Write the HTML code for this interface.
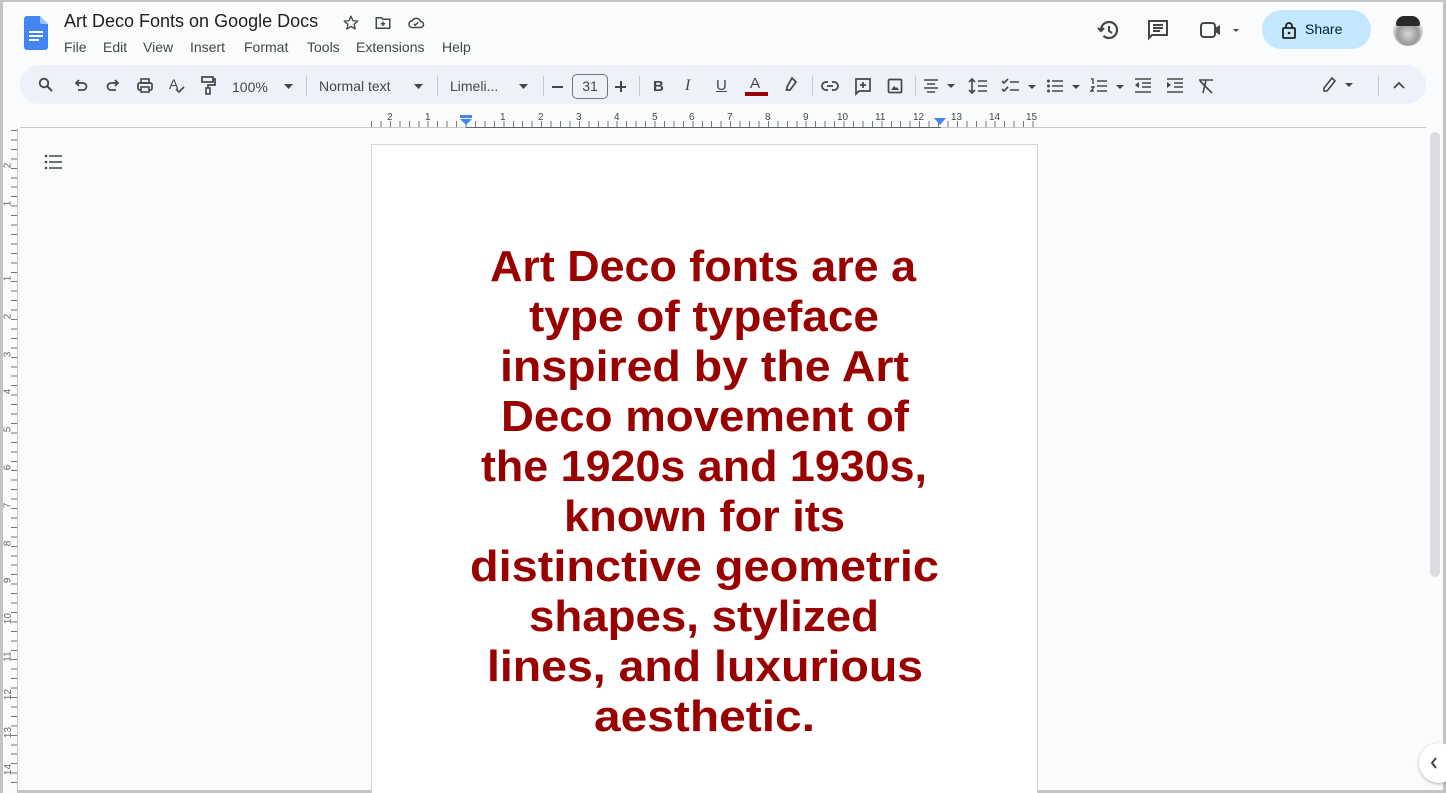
<!DOCTYPE html>
<html><head><meta charset="utf-8">
<style>
*{box-sizing:border-box;margin:0;padding:0}
html,body{width:1446px;height:793px;overflow:hidden}
body{background:#f9fbfd;font-family:"Liberation Sans",Arial,sans-serif;color:#444746;position:relative;border:3px solid #c4c4c4;border-top-width:2px}
.abs{position:absolute}
.title{left:61px;top:9px;font-size:18px;color:#1f1f1f}
.menu{top:37px;font-size:14px;color:#444746}
.tb{left:17px;top:63px;width:1406px;height:39px;background:#edf2fa;border-radius:20px}
.tt{font-size:14px;color:#444746}
.sep{width:1px;height:20px;background:#c7c7c7;top:10px}
svg{position:absolute;overflow:visible}
.page{left:368px;top:142px;width:667px;height:660px;background:#fff;border:1px solid #d3d3d3}
.share{left:1259px;top:8px;width:109px;height:39px;background:#c2e7ff;border-radius:20px;font-size:14px;color:#001d35}
</style></head><body>
<!-- docs logo -->
<svg style="left:21px;top:14px" width="24" height="34" viewBox="0 0 24 34"><path d="M3 0h13l8 8v23a3 3 0 0 1-3 3H3a3 3 0 0 1-3-3V3a3 3 0 0 1 3-3z" fill="#4285f4"/><path d="M16 0v6a2 2 0 0 0 2 2h6z" fill="#a1c2fa"/><rect x="5" y="15" width="14" height="2" fill="#fff"/><rect x="5" y="19" width="14" height="2" fill="#fff"/><rect x="5" y="23" width="10" height="2" fill="#fff"/></svg>
<div class="abs title">Art Deco Fonts on Google Docs</div>
<svg style="left:339px;top:12px" width="18" height="18" viewBox="0 0 24 24"><path d="M12 3l2.6 6 6.4.5-4.9 4.2 1.5 6.3L12 16.6 6.4 20l1.5-6.3L3 9.5 9.4 9z" fill="none" stroke="#444746" stroke-width="1.8" stroke-linejoin="round"/></svg>
<svg style="left:371px;top:12px" width="18" height="18" viewBox="0 0 24 24"><path d="M3 5h7l2 2h9v12H3z" fill="none" stroke="#444746" stroke-width="2"/><path d="M12 10v6M9 13h6" stroke="#444746" stroke-width="2"/></svg>
<svg style="left:403px;top:12px" width="20" height="18" viewBox="0 0 24 24"><path d="M7 18h11a4 4 0 0 0 0-8 6 6 0 0 0-11-1 4.5 4.5 0 0 0 0 9z" fill="none" stroke="#444746" stroke-width="2"/><path d="M9 13l2 2 4-4" fill="none" stroke="#444746" stroke-width="2"/></svg>
<div class="abs menu" style="left:61px">File</div>
<div class="abs menu" style="left:100px">Edit</div>
<div class="abs menu" style="left:140px">View</div>
<div class="abs menu" style="left:187px">Insert</div>
<div class="abs menu" style="left:241px">Format</div>
<div class="abs menu" style="left:304px">Tools</div>
<div class="abs menu" style="left:353px">Extensions</div>
<div class="abs menu" style="left:439px">Help</div>

<!-- right header -->
<svg style="left:1093px;top:16px" width="24" height="24" viewBox="0 0 24 24"><path d="M5 12a8 8 0 1 1 2.5 5.8" fill="none" stroke="#444746" stroke-width="2.2"/><path d="M2 10l3 3 3-3" fill="none" stroke="#444746" stroke-width="2.2"/><path d="M13 8v5l3 2" fill="none" stroke="#444746" stroke-width="2"/></svg>
<svg style="left:1143px;top:16px" width="24" height="24" viewBox="0 0 24 24"><path d="M3 3h18v14H6l-3 3z" fill="none" stroke="#444746" stroke-width="2"/><path d="M7 7h10M7 10h10M7 13h7" stroke="#444746" stroke-width="2"/></svg>
<svg style="left:1196px;top:17px" width="44" height="22" viewBox="0 0 44 22"><rect x="2" y="4" width="14" height="14" rx="3" fill="none" stroke="#444746" stroke-width="2"/><path d="M16 9l5-3v10l-5-3z" fill="#444746"/><path d="M34 10h6l-3 3z" fill="#444746"/></svg>
<div class="abs share"><svg style="left:19px;top:11px" width="16" height="18" viewBox="0 0 16 18"><rect x="2" y="7" width="12" height="10" rx="1" fill="none" stroke="#1f1f1f" stroke-width="1.8"/><path d="M5 7V5a3 3 0 0 1 6 0v2" fill="none" stroke="#1f1f1f" stroke-width="1.8"/><circle cx="8" cy="12" r="1.3" fill="#1f1f1f"/></svg><span class="abs" style="left:43px;top:11px">Share</span></div>
<div class="abs" style="left:1390px;top:14px;width:30px;height:30px;border-radius:50%;background:radial-gradient(circle at 50% 60%,#d8d8d8 0,#9a9a9a 45%,#f0f0f0 70%)"></div>
<div class="abs" style="left:1393px;top:14px;width:24px;height:10px;border-radius:12px 12px 3px 3px;background:#2a2a2a"></div>

<!-- toolbar -->
<div class="abs tb"></div>
<svg style="left:35px;top:75px" width="16" height="16" viewBox="0 0 16 16"><circle cx="6" cy="6" r="4.3" fill="none" stroke="#444746" stroke-width="1.8"/><path d="M9 9l5 5" stroke="#444746" stroke-width="2"/></svg>
<svg style="left:70px;top:77px" width="16" height="14" viewBox="0 0 16 14"><path d="M4 4h6a3.5 3.5 0 0 1 0 7H5M6 1L3 4l3 3" fill="none" stroke="#444746" stroke-width="1.7"/></svg>
<svg style="left:102px;top:77px" width="16" height="14" viewBox="0 0 16 14"><path d="M12 4H6a3.5 3.5 0 0 0 0 7h5M10 1l3 3-3 3" fill="none" stroke="#444746" stroke-width="1.7"/></svg>
<svg style="left:133px;top:75px" width="18" height="17" viewBox="0 0 18 17"><rect x="2" y="6" width="14" height="7" rx="1.5" fill="none" stroke="#444746" stroke-width="1.7"/><rect x="5" y="2" width="8" height="4" fill="none" stroke="#444746" stroke-width="1.6"/><rect x="5" y="10" width="8" height="5" fill="#edf2fa" stroke="#444746" stroke-width="1.6"/></svg>
<div class="abs" style="left:166px;top:74px;font-size:14px;color:#444746">A</div>
<svg style="left:172px;top:84px" width="10" height="8" viewBox="0 0 10 8"><path d="M1 3l3 3 5-5" fill="none" stroke="#444746" stroke-width="1.6"/></svg>
<svg style="left:197px;top:74px" width="16" height="20" viewBox="0 0 16 20"><rect x="2" y="1" width="11" height="5" fill="none" stroke="#444746" stroke-width="1.7"/><path d="M13 3h2v6H8v3" fill="none" stroke="#444746" stroke-width="1.7"/><rect x="6" y="12" width="4" height="6" fill="none" stroke="#444746" stroke-width="1.6"/></svg>
<div class="abs tt" style="left:229px;top:77px">100%</div>
<svg style="left:281px;top:82px" width="10" height="6"><path d="M0 0h9l-4.5 5z" fill="#444746"/></svg>
<div class="abs sep" style="left:303px;top:74px"></div>
<div class="abs tt" style="left:316px;top:76px">Normal text</div>
<svg style="left:411px;top:82px" width="10" height="6"><path d="M0 0h9l-4.5 5z" fill="#444746"/></svg>
<div class="abs sep" style="left:434px;top:74px"></div>
<div class="abs tt" style="left:447px;top:76px">Limeli...</div>
<svg style="left:516px;top:82px" width="10" height="6"><path d="M0 0h9l-4.5 5z" fill="#444746"/></svg>
<div class="abs sep" style="left:540px;top:74px"></div>
<div class="abs" style="left:549px;top:84px;width:11px;height:1.6px;background:#444746"></div>
<div class="abs" style="left:569px;top:72px;width:36px;height:25px;border:1px solid #747775;border-radius:5px;font-size:14px;text-align:center;line-height:23px;color:#444746">31</div>
<div class="abs" style="left:612px;top:84px;width:11px;height:1.6px;background:#444746"></div>
<div class="abs" style="left:617px;top:79px;width:1.6px;height:11px;background:#444746"></div>
<div class="abs sep" style="left:636px;top:74px"></div>
<div class="abs" style="left:650px;top:76px;font-size:15px;font-weight:bold">B</div>
<div class="abs" style="left:682px;top:75px;font-size:16px;font-style:italic;font-family:'Liberation Serif',serif">I</div>
<div class="abs" style="left:713px;top:75px;font-size:15px;text-decoration:underline">U</div>
<div class="abs" style="left:747px;top:73px;font-size:15px">A</div>
<div class="abs" style="left:742px;top:90px;width:23px;height:4px;background:#990000"></div>
<svg style="left:779px;top:75px" width="16" height="16" viewBox="0 0 16 16"><path d="M10 1l4 4-6 8H5v-3z" fill="none" stroke="#444746" stroke-width="1.7"/><path d="M3 13l2-2 1 1-1 2z" fill="#444746"/></svg>
<div class="abs sep" style="left:809px;top:74px"></div>
<svg style="left:818px;top:78px" width="18" height="12" viewBox="0 0 18 12"><path d="M7 2H5a4 4 0 0 0 0 8h2M11 2h2a4 4 0 0 1 0 8h-2M6 6h6" fill="none" stroke="#444746" stroke-width="1.8"/></svg>
<svg style="left:851px;top:75px" width="18" height="18" viewBox="0 0 18 18"><path d="M2 2h14v12H5l-3 3z" fill="none" stroke="#444746" stroke-width="1.7"/><path d="M9 5v6M6 8h6" stroke="#444746" stroke-width="1.7"/></svg>
<svg style="left:884px;top:76px" width="16" height="16" viewBox="0 0 16 16"><rect x="1.5" y="1.5" width="13" height="13" rx="1" fill="none" stroke="#444746" stroke-width="1.7"/><path d="M4 12l3-4 2 2 1-1 2 3z" fill="#444746"/></svg>
<div class="abs sep" style="left:912px;top:74px"></div>
<svg style="left:920px;top:77px" width="36" height="14" viewBox="0 0 36 14"><path d="M1 1h14M4 5h8M1 9h14M4 13h8" stroke="#444746" stroke-width="1.6"/><path d="M24 5h8l-4 4z" fill="#444746"/></svg>
<svg style="left:965px;top:76px" width="20" height="16" viewBox="0 0 20 16"><path d="M4 1v14M1 4l3-3 3 3M1 12l3 3 3-3M10 3h9M10 8h9M10 13h9" fill="none" stroke="#444746" stroke-width="1.6"/></svg>
<svg style="left:998px;top:76px" width="38" height="16" viewBox="0 0 38 16"><path d="M1 3l2 2 4-4M1 11l2 2 4-4M9 4h9M9 12h9" fill="none" stroke="#444746" stroke-width="1.6"/><path d="M27 7h8l-4 4z" fill="#444746"/></svg>
<svg style="left:1043px;top:76px" width="38" height="16" viewBox="0 0 38 16"><circle cx="2.5" cy="3" r="1.5" fill="#444746"/><circle cx="2.5" cy="8" r="1.5" fill="#444746"/><circle cx="2.5" cy="13" r="1.5" fill="#444746"/><path d="M6 3h11M6 8h11M6 13h11" stroke="#444746" stroke-width="1.6"/><path d="M26 7h8l-4 4z" fill="#444746"/></svg>
<svg style="left:1087px;top:76px" width="38" height="16" viewBox="0 0 38 16"><path d="M1 1h2v5M1 9h3l-3 4h3M7 3h10M7 8h10M7 13h10" fill="none" stroke="#444746" stroke-width="1.4"/><path d="M26 7h8l-4 4z" fill="#444746"/></svg>
<svg style="left:1131px;top:76px" width="18" height="16" viewBox="0 0 18 16"><path d="M1 1h16M8 5h9M8 9h9M1 14h16" stroke="#444746" stroke-width="1.6"/><path d="M5 4L1 7l4 3z" fill="#444746"/></svg>
<svg style="left:1163px;top:76px" width="18" height="16" viewBox="0 0 18 16"><path d="M1 1h16M8 5h9M8 9h9M1 14h16" stroke="#444746" stroke-width="1.6"/><path d="M1 4l4 3-4 3z" fill="#444746"/></svg>
<svg style="left:1194px;top:76px" width="18" height="16" viewBox="0 0 18 16"><path d="M2 2h14M9 2L6 15M3 3l12 12" fill="none" stroke="#444746" stroke-width="1.6"/></svg>
<svg style="left:1318px;top:75px" width="36" height="16" viewBox="0 0 36 16"><path d="M11 1l3 3-8 10H3v-3z" fill="none" stroke="#444746" stroke-width="1.6"/><path d="M24 6h8l-4 4z" fill="#444746"/></svg>
<div class="abs sep" style="left:1375px;top:74px"></div>
<svg style="left:1390px;top:80px" width="12" height="8"><path d="M1 6l5-5 5 5" fill="none" stroke="#444746" stroke-width="1.7"/></svg>

<!-- top ruler -->
<div class="abs" style="left:368px;top:114px;width:667px;height:11px;background:repeating-linear-gradient(90deg,#777 0 1px,transparent 1px 9.45px);-webkit-mask:linear-gradient(#000,#000) bottom/100% 6px no-repeat;mask:linear-gradient(#000,#000) bottom/100% 6px no-repeat"></div>
<div class="abs" style="left:17px;top:125px;width:1406px;height:1px;background:#c4c7c5"></div>
<div class="abs" style="left:463px;top:125px;width:475px;height:1px;background:#5f6368"></div>
<div class="abs" style="left:0;top:0;font-size:10px;color:#444746">
<span class="abs" style="left:384px;top:110px">2</span><span class="abs" style="left:422px;top:110px">1</span>
<span class="abs" style="left:497px;top:110px">1</span><span class="abs" style="left:535px;top:110px">2</span><span class="abs" style="left:573px;top:110px">3</span><span class="abs" style="left:611px;top:110px">4</span><span class="abs" style="left:649px;top:110px">5</span><span class="abs" style="left:686px;top:110px">6</span><span class="abs" style="left:724px;top:110px">7</span><span class="abs" style="left:762px;top:110px">8</span><span class="abs" style="left:800px;top:110px">9</span><span class="abs" style="left:834px;top:110px">10</span><span class="abs" style="left:872px;top:110px">11</span><span class="abs" style="left:910px;top:110px">12</span><span class="abs" style="left:948px;top:110px">13</span><span class="abs" style="left:986px;top:110px">14</span><span class="abs" style="left:1023px;top:110px">15</span>
</div>
<svg style="left:457px;top:113px" width="12" height="12"><rect x="0" y="0" width="12" height="3" fill="#4285f4"/><path d="M0 4h12l-6 6z" fill="#4285f4"/></svg>
<svg style="left:931px;top:116px" width="12" height="8"><path d="M0 0h12l-6 7z" fill="#4285f4"/></svg>

<!-- left ruler -->
<div class="abs" style="left:0;top:126px;width:15px;height:670px;background:#f9fbfd;border-right:1px solid #c4c7c5"></div>
<div class="abs" style="left:6px;top:128px;width:8px;height:660px;background:repeating-linear-gradient(180deg,#777 0 1px,transparent 1px 9.45px);-webkit-mask:linear-gradient(90deg,transparent 0 2px,#000 2px);"></div>
<div class="abs" style="left:0;top:0;font-size:10px;color:#666">
<span class="abs" style="left:2px;top:158px;transform:rotate(-90deg)">2</span><span class="abs" style="left:2px;top:196px;transform:rotate(-90deg)">1</span><span class="abs" style="left:2px;top:271px;transform:rotate(-90deg)">1</span><span class="abs" style="left:2px;top:309px;transform:rotate(-90deg)">2</span><span class="abs" style="left:2px;top:347px;transform:rotate(-90deg)">3</span><span class="abs" style="left:2px;top:384px;transform:rotate(-90deg)">4</span><span class="abs" style="left:2px;top:422px;transform:rotate(-90deg)">5</span><span class="abs" style="left:2px;top:460px;transform:rotate(-90deg)">6</span><span class="abs" style="left:2px;top:498px;transform:rotate(-90deg)">7</span><span class="abs" style="left:2px;top:536px;transform:rotate(-90deg)">8</span><span class="abs" style="left:2px;top:573px;transform:rotate(-90deg)">9</span><span class="abs" style="left:0px;top:611px;transform:rotate(-90deg)">10</span><span class="abs" style="left:0px;top:649px;transform:rotate(-90deg)">11</span><span class="abs" style="left:0px;top:687px;transform:rotate(-90deg)">12</span><span class="abs" style="left:0px;top:725px;transform:rotate(-90deg)">13</span><span class="abs" style="left:0px;top:762px;transform:rotate(-90deg)">14</span>
</div>

<!-- outline icon -->
<svg style="left:41px;top:152px" width="20" height="16" viewBox="0 0 20 16"><circle cx="2" cy="2" r="1.3" fill="#444746"/><circle cx="2" cy="8" r="1.3" fill="#444746"/><circle cx="2" cy="14" r="1.3" fill="#444746"/><path d="M5 2h13M5 8h13M5 14h13" stroke="#444746" stroke-width="1.6"/></svg>

<!-- scrollbar -->
<div class="abs" style="left:1427px;top:130px;width:10px;height:445px;background:#dadce0;border-radius:5px"></div>
<div class="abs" style="left:1416px;top:741px;width:40px;height:40px;border-radius:50%;background:#fff;box-shadow:0 1px 3px rgba(0,0,0,.3)"></div>
<svg style="left:1426px;top:754px" width="10" height="14"><path d="M7 2L3 7l4 5" fill="none" stroke="#444746" stroke-width="2"/></svg>

<!-- page -->
<div class="abs page"></div>
<svg style="left:0;top:0" width="1446" height="793">
<g fill="#990000" font-family="Liberation Sans, sans-serif" font-weight="bold" font-size="44" lengthAdjust="spacingAndGlyphs">
<text x="487" y="279" textLength="426" lengthAdjust="spacingAndGlyphs">Art Deco fonts are a</text>
<text x="526" y="329" textLength="350" lengthAdjust="spacingAndGlyphs">type of typeface</text>
<text x="497" y="379" textLength="409" lengthAdjust="spacingAndGlyphs">inspired by the Art</text>
<text x="498" y="429" textLength="408" lengthAdjust="spacingAndGlyphs">Deco movement of</text>
<text x="478" y="479" textLength="446" lengthAdjust="spacingAndGlyphs">the 1920s and 1930s,</text>
<text x="561" y="529" textLength="281" lengthAdjust="spacingAndGlyphs">known for its</text>
<text x="467" y="579" textLength="469" lengthAdjust="spacingAndGlyphs">distinctive geometric</text>
<text x="526" y="629" textLength="350" lengthAdjust="spacingAndGlyphs">shapes, stylized</text>
<text x="484" y="679" textLength="436" lengthAdjust="spacingAndGlyphs">lines, and luxurious</text>
<text x="591" y="729" textLength="221" lengthAdjust="spacingAndGlyphs">aesthetic.</text>
</g></svg>
</body></html>
